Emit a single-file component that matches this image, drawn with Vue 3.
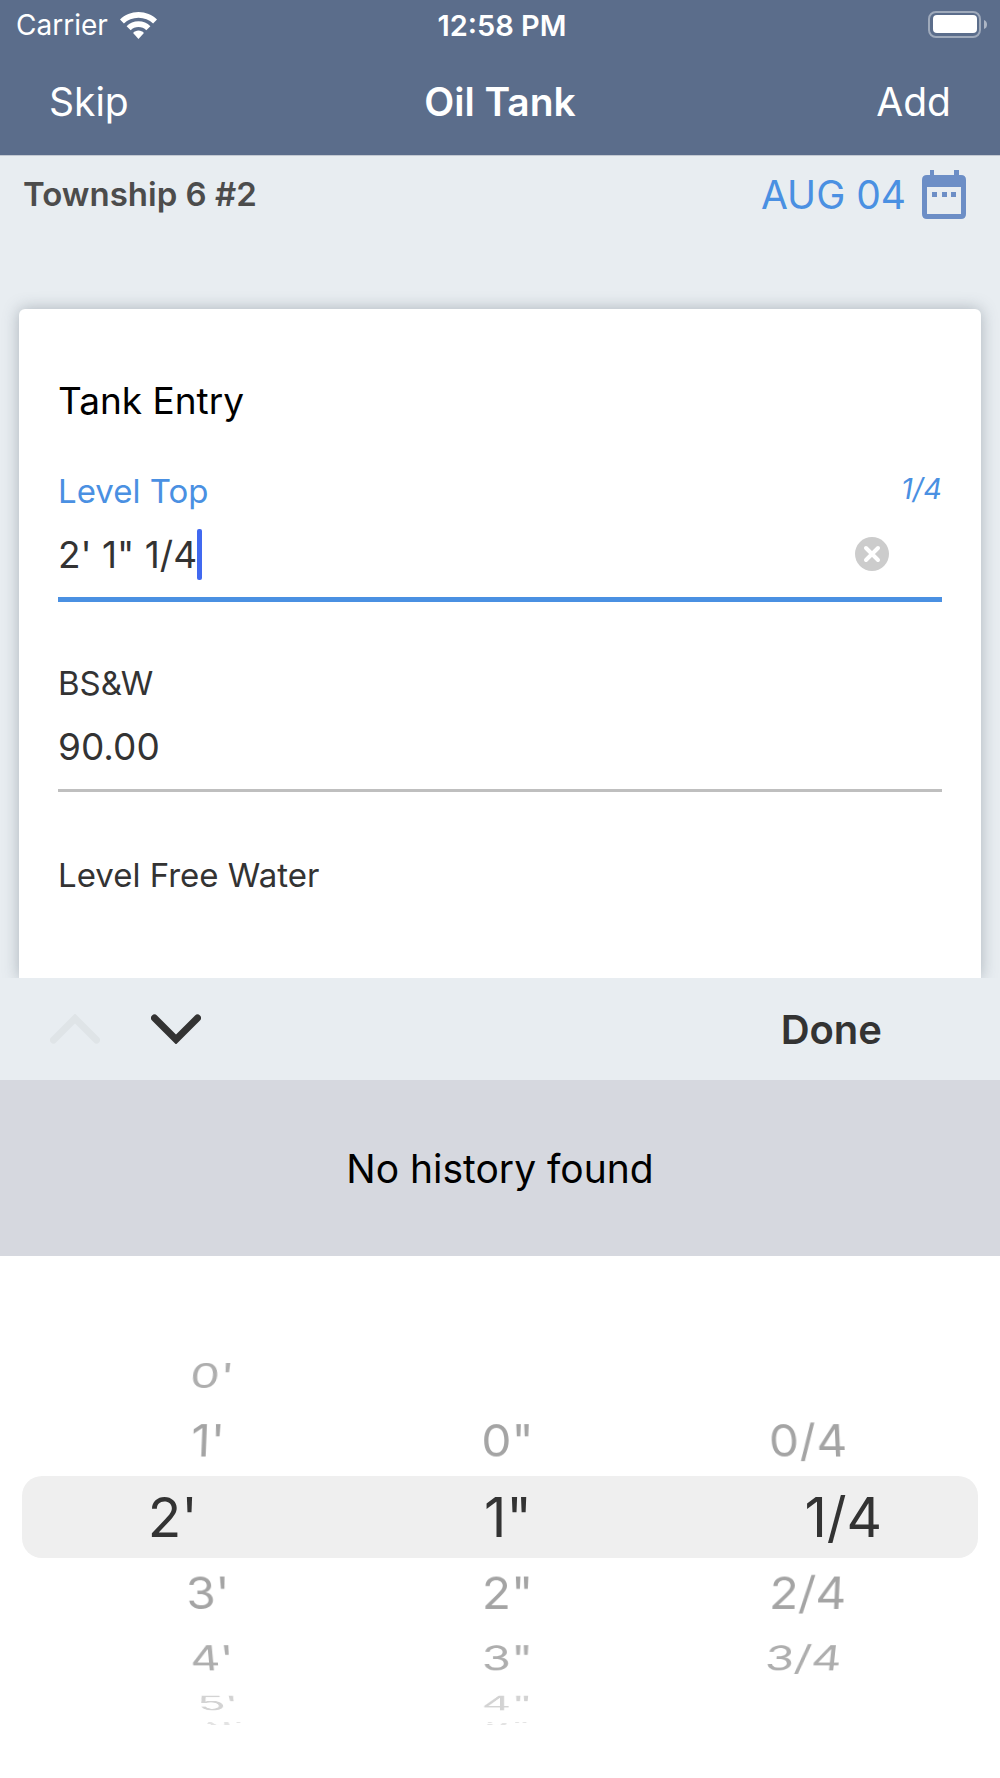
<script setup>
import { ref } from 'vue'

const levelTop = ref('2\' 1" 1/4')
const bsw = ref('90.00')
const freeWater = ref('')

const STEP = 20
const RADIUS = 224
const FADE = [0, 0.45, 0.4, 0.22, 0.14]

const columns = [
  { name: 'Feet', selected: 2, options: ["0'", "1'", "2'", "3'", "4'", "5'", "6'"] },
  { name: 'Inches', selected: 1, options: ['0"', '1"', '2"', '3"', '4"', '5"'] },
  { name: 'Quarters', selected: 1, options: ['0/4', '1/4', '2/4', '3/4'] },
]

// Places an option on the picker drum, turned away from the selected row.
function drumStyle(index, selected) {
  const distance = index - selected
  return {
    transform: `rotateX(${-distance * STEP}deg) translateZ(${RADIUS}px)`,
    opacity: FADE[Math.abs(distance)],
  }
}
</script>

<template>
  <div class="screen">
    <header class="header">
      <div class="status">
        <div class="carrier">
          <span>Carrier</span>
          <svg class="wifi" viewBox="0 0 37 27" aria-hidden="true">
            <path d="M18.5 0C11.4 0 4.900 2.800 0 7.500L3.900 11.500C7.700 7.900 12.800 5.800 18.500 5.800S29.300 7.900 33.100 11.500L37 7.500C32.100 2.800 25.600 0 18.500 0Z" />
            <path d="M18.500 9.300C13.900 9.300 9.700 11.100 6.600 14.200L10.700 18.300C12.700 16.300 15.500 15.100 18.500 15.100S24.300 16.300 26.300 18.300L30.400 14.200C27.300 11.100 23.100 9.300 18.500 9.300Z" />
            <path d="M18.500 18.600C16.400 18.600 14.500 19.500 13.100 20.900L18.500 27L23.900 20.900C22.500 19.500 20.600 18.600 18.500 18.600Z" />
          </svg>
        </div>
        <span class="time">12:58 PM</span>
        <svg class="battery" viewBox="0 0 60 28" aria-label="Battery full">
          <rect x="1" y="1" width="51" height="25" rx="7" fill="none" stroke="#fff" stroke-opacity=".42" stroke-width="2" />
          <rect x="5" y="4" width="44" height="18" rx="4" fill="#fff" />
          <path d="M56 9Q59 10 59 13.500T56 18Z" fill="#fff" fill-opacity=".5" />
        </svg>
      </div>
      <nav class="nav">
        <button type="button" class="nav-button">Skip</button>
        <h1 class="nav-title">Oil Tank</h1>
        <button type="button" class="nav-button end">Add</button>
      </nav>
    </header>

    <main class="content">
      <div class="subheader">
        <h2 class="site">Township 6 #2</h2>
        <button type="button" class="date">
          <span>AUG 04</span>
          <svg class="calendar" viewBox="0 0 44 49" aria-hidden="true">
            <path fill-rule="evenodd" d="M8 0H12V5H32V0H37V5H39Q44 5 44 10V44Q44 49 39 49H5Q0 49 0 44V10Q0 5 5 5H8ZM5 17V44H39V17Z" />
            <path d="M10 22H15V27H10ZM20 22H25V27H20ZM29 22H34V27H29Z" />
          </svg>
        </button>
      </div>

      <form class="card" @submit.prevent>
        <h3 class="card-title">Tank Entry</h3>
        <div class="fields">
          <div class="field active">
            <div class="label-row">
              <label for="level-top">Level Top</label>
              <span class="hint">1/4</span>
            </div>
            <div class="control">
              <input id="level-top" v-model="levelTop" class="sized" type="text" autocomplete="off" />
              <span class="caret"></span>
              <button type="button" class="clear" aria-label="Clear">
                <svg viewBox="0 0 34 34" aria-hidden="true">
                  <circle cx="17" cy="17" r="17" fill="#ccc" />
                  <path d="M11 11L23 23M23 11L11 23" stroke="#fff" stroke-width="4" stroke-linecap="round" />
                </svg>
              </button>
            </div>
          </div>
          <div class="field">
            <div class="label-row"><label for="bsw">BS&amp;W</label></div>
            <div class="control"><input id="bsw" v-model="bsw" type="text" /></div>
          </div>
          <div class="field">
            <div class="label-row"><label for="free-water">Level Free Water</label></div>
            <div class="control"><input id="free-water" v-model="freeWater" type="text" /></div>
          </div>
        </div>
      </form>
    </main>

    <div class="accessory">
      <button type="button" class="arrow" aria-label="Previous field" disabled>
        <svg viewBox="0 0 50 30" aria-hidden="true"><path d="M3.500 26L25 4.500L46.500 26" /></svg>
      </button>
      <button type="button" class="arrow" aria-label="Next field">
        <svg viewBox="0 0 50 30" aria-hidden="true"><path d="M3.500 4L25 25.500L46.500 4" /></svg>
      </button>
      <button type="button" class="done">Done</button>
    </div>

    <p class="history">No history found</p>

    <section class="picker" aria-label="Level picker">
      <div class="band"></div>
      <div class="drums">
        <ul v-for="column in columns" :key="column.name" class="drum" role="listbox" :aria-label="column.name">
          <template v-for="(option, index) in column.options" :key="option">
            <li v-if="index !== column.selected" role="option" :style="drumStyle(index, column.selected)">{{ option }}</li>
          </template>
        </ul>
      </div>
      <div class="selection">
        <output v-for="column in columns" :key="column.name">{{ column.options[column.selected] }}</output>
      </div>
    </section>
  </div>
</template>

<style>
body {
  margin: 0;
  background: #fff;
}
</style>

<style scoped>
.screen {
  font-family: Inter, "Liberation Sans", sans-serif;
  color: #333;
  overflow: hidden;
}

h1, h2, h3, p, ul {
  margin: 0;
  padding: 0;
}

button, input {
  margin: 0;
  padding: 0;
  border: 0;
  background: none;
  font: inherit;
  color: inherit;
}

svg {
  display: block;
}

.header {
  background: #5b6d8b;
  border-bottom: 1px solid #c3c9d2;
  color: #fff;
}

.status {
  display: grid;
  grid-template-columns: 1fr auto 1fr;
  align-items: center;
  height: 50px;
  padding: 0 12px 0 16px;
  font-size: 28px;
}

.carrier {
  display: flex;
  align-items: center;
  gap: 12px;
}

.wifi {
  width: 37px;
  height: 27px;
  fill: #fff;
}

.time {
  font-size: 29px;
  font-weight: 600;
}

.battery {
  width: 60px;
  height: 28px;
  justify-self: end;
}

.nav {
  display: grid;
  grid-template-columns: 1fr auto 1fr;
  align-items: center;
  height: 102px;
  padding: 0 49px 3px;
  font-size: 39px;
}

.nav-button {
  justify-self: start;
}

.nav-button.end {
  justify-self: end;
}

.nav-title {
  font-size: 39px;
  font-weight: 600;
}

.content {
  overflow: hidden;
  background: #e8edf1;
}

.subheader {
  display: flex;
  align-items: center;
  justify-content: space-between;
  height: 76px;
  padding: 0 34px 0 23px;
}

.site {
  font-size: 33px;
  font-weight: 600;
  color: #4c4c4c;
}

.date {
  display: flex;
  align-items: center;
  gap: 16px;
  font-size: 39px;
  color: #4a90e2;
}

.calendar {
  width: 44px;
  height: 49px;
  fill: #6c8ec6;
}

.card {
  margin: 77px 19px 0;
  padding: 69px 39px 0;
  background: #fff;
  border-radius: 6px 6px 0 0;
  box-shadow: 0 0 16px rgba(60, 75, 90, 0.36);
}

.card-title {
  margin-bottom: 47px;
  font-size: 37px;
  line-height: 46px;
  font-weight: 400;
  color: #000;
}

.fields {
  display: grid;
  grid-template-rows: 192px 192px 123px;
}

.field {
  overflow: hidden;
}

.label-row {
  display: flex;
  justify-content: space-between;
  font-size: 33px;
  line-height: 40px;
}

.active .label-row {
  color: #4a90e2;
}

.hint {
  font-size: 29px;
  line-height: 36px;
  font-style: italic;
}

.control {
  display: flex;
  align-items: center;
  height: 86px;
  border-bottom: 3px solid #bfbfbf;
  font-size: 37px;
}

.active .control {
  border-bottom: 5px solid #4a90e2;
}

.control input {
  flex: 1;
  min-width: 0;
  height: 48px;
  outline: none;
}

.control .sized {
  flex: none;
  field-sizing: content;
}

.caret {
  width: 5px;
  height: 51px;
  border-radius: 2px;
  background: #4169f0;
}

.clear {
  margin-left: auto;
  margin-right: 53px;
}

.clear svg {
  width: 34px;
  height: 34px;
}

.accessory {
  display: flex;
  align-items: center;
  height: 102px;
  padding: 0 118px 0 50px;
  background: #e8edf1;
}

.arrow {
  margin-right: 51px;
}

.arrow svg {
  width: 50px;
  height: 30px;
  fill: none;
  stroke: #333;
  stroke-width: 7px;
  stroke-linecap: round;
  stroke-linejoin: miter;
}

.arrow:disabled svg {
  stroke: #dfe4e7;
}

.done {
  margin-left: auto;
  font-size: 40px;
  font-weight: 600;
}

.history {
  padding: 65px 0 63px;
  background: #d6d8df;
  font-size: 39px;
  line-height: 48px;
  text-align: center;
  color: #000;
}

/* Band, drums and selected values share one grid cell and stack. */
.picker {
  display: grid;
  align-items: center;
  padding: 220px 0;
  background: #fff;
}

.picker > * {
  grid-area: 1 / 1;
}

.band {
  height: 82px;
  margin: 0 22px;
  border-radius: 20px;
  background: #efefef;
}

.drums,
.selection {
  display: flex;
  justify-content: center;
  padding-left: 16px;
  text-align: center;
}

.drums {
  perspective: 2700px;
  font-size: 48px;
  line-height: 60px;
}

.drum {
  display: grid;
  flex: 0 0 calc(31% - 4px);
  list-style: none;
  transform: translateZ(-224px);
  transform-style: preserve-3d;
}

.drum li {
  grid-area: 1 / 1;
}

.selection {
  margin: 0 -16px;
  font-size: 55px;
  line-height: 82px;
}

.selection output {
  flex: 0 0 33%;
}
</style>
